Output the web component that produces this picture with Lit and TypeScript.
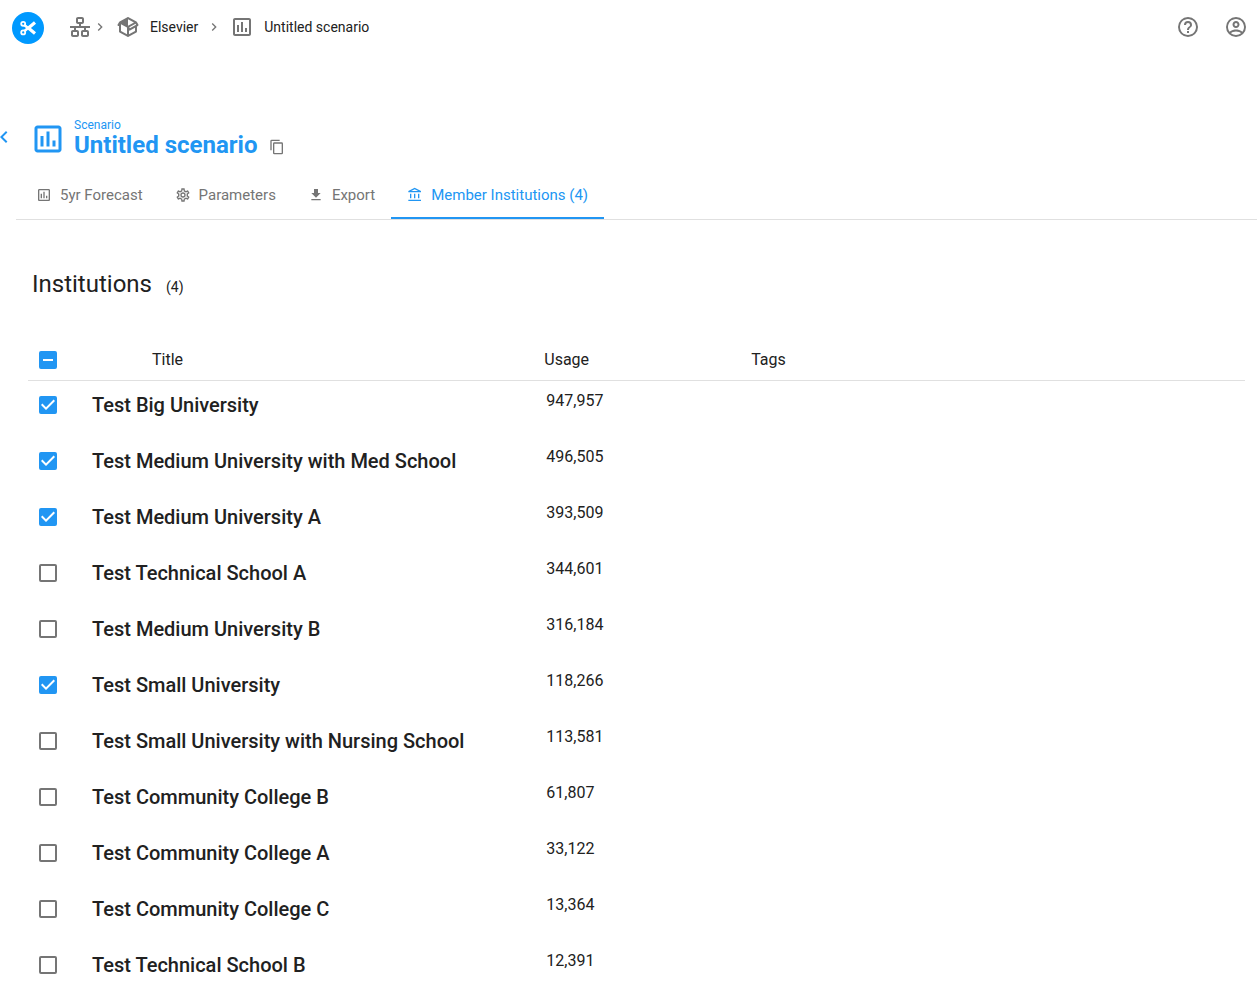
import { LitElement, html, css, svg } from "lit";
import { customElement, property, state } from "lit/decorators.js";
import { classMap } from "lit/directives/class-map.js";

const icons: Record<string, string> = {
  lan: "M10,2C8.89,2 8,2.89 8,4V7C8,8.11 8.89,9 10,9H11V11H2V13H6V15H5C3.89,15 3,15.89 3,17V20C3,21.11 3.89,22 5,22H9C10.11,22 11,21.11 11,20V17C11,15.89 10.11,15 9,15H8V13H16V15H15C13.89,15 13,15.89 13,17V20C13,21.11 13.89,22 15,22H19C20.11,22 21,21.11 21,20V17C21,15.89 20.11,15 19,15H18V13H22V11H13V9H14C15.11,9 16,8.11 16,7V4C16,2.89 15.11,2 14,2H10M10,4H14V7H10V4M5,17H9V20H5V17M15,17H19V20H15V17Z",
  box: "M2,10.96C1.5,10.68 1.35,10.07 1.63,9.59L3.13,7C3.24,6.8 3.41,6.66 3.6,6.58L11.43,2.18C11.59,2.06 11.79,2 12,2C12.21,2 12.41,2.06 12.57,2.18L20.47,6.62C20.66,6.72 20.82,6.88 20.91,7.08L22.36,9.6C22.64,10.08 22.47,10.69 22,10.96L21,11.54V16.5C21,16.88 20.79,17.21 20.47,17.38L12.57,21.82C12.41,21.94 12.21,22 12,22C11.79,22 11.59,21.94 11.43,21.82L3.53,17.38C3.21,17.21 3,16.88 3,16.5V10.96C2.7,11.13 2.32,11.14 2,10.96M12,4.15V10.85L17.96,7.5L12,4.15M5,15.91L11,19.29V12.58L5,9.21V15.91M19,15.91V12.69L14,15.59C13.67,15.77 13.3,15.76 13,15.6V19.29L19,15.91M13.85,13.36L20.13,9.73L19.55,8.72L13.27,12.35L13.85,13.36Z",
  chart: "M9 17H7V10H9V17M13 17H11V7H13V17M17 17H15V13H17V17M19 19H5V5H19V19.1M19 3H5C3.9 3 3 3.9 3 5V19C3 20.1 3.9 21 5 21H19C20.1 21 21 20.1 21 19V5C21 3.9 20.1 3 19 3Z",
  help: "M11,18H13V16H11V18M12,2A10,10 0 0,0 2,12A10,10 0 0,0 12,22A10,10 0 0,0 22,12A10,10 0 0,0 12,2M12,20C7.59,20 4,16.41 4,12C4,7.59 7.59,4 12,4C16.41,4 20,7.59 20,12C20,16.41 16.41,20 12,20M12,6A4,4 0 0,0 8,10H10A2,2 0 0,1 12,8A2,2 0 0,1 14,10C14,12 11,11.75 11,15H13C13,12.75 16,12.5 16,10A4,4 0 0,0 12,6Z",
  account: "M12,2A10,10 0 0,0 2,12A10,10 0 0,0 12,22A10,10 0 0,0 22,12A10,10 0 0,0 12,2M7.07,18.28C7.5,17.38 10.12,16.5 12,16.5C13.88,16.5 16.5,17.38 16.93,18.28C15.57,19.36 13.86,20 12,20C10.14,20 8.43,19.36 7.07,18.28M18.36,16.83C16.93,15.09 13.46,14.5 12,14.5C10.54,14.5 7.07,15.09 5.64,16.83C4.62,15.5 4,13.82 4,12C4,7.59 7.59,4 12,4C16.41,4 20,7.59 20,12C20,13.82 19.38,15.5 18.36,16.83M12,6C10.06,6 8.5,7.56 8.5,9.5C8.5,11.44 10.06,13 12,13C13.94,13 15.5,11.44 15.5,9.5C15.5,7.56 13.94,6 12,6M12,11A1.5,1.5 0 0,1 10.5,9.5A1.5,1.5 0 0,1 12,8A1.5,1.5 0 0,1 13.5,9.5A1.5,1.5 0 0,1 12,11Z",
  copy: "M19,21H8V7H19M19,5H8A2,2 0 0,0 6,7V21A2,2 0 0,0 8,23H19A2,2 0 0,0 21,21V7A2,2 0 0,0 19,5M16,1H4A2,2 0 0,0 2,3V17H4V3H16V1Z",
  download: "M5,20H19V18H5M19,9H15V3H9V9H5L12,16L19,9Z",
  bank: "M6.5,10H4.5V17H6.5V10M12.5,10H10.5V17H12.5V10M21,19H2V21H21V19M18.5,10H16.5V17H18.5V10M11.5,3.26L16.71,6H6.29L11.5,3.26M11.5,1L2,6V8H21V6L11.5,1Z",
  cog: "M12,8A4,4 0 0,1 16,12A4,4 0 0,1 12,16A4,4 0 0,1 8,12A4,4 0 0,1 12,8M12,10A2,2 0 0,0 10,12A2,2 0 0,0 12,14A2,2 0 0,0 14,12A2,2 0 0,0 12,10M10,22C9.75,22 9.54,21.82 9.5,21.58L9.13,18.93C8.5,18.68 7.96,18.34 7.44,17.94L4.95,18.95C4.73,19.03 4.46,18.95 4.34,18.73L2.34,15.27C2.21,15.05 2.27,14.78 2.46,14.63L4.57,12.97L4.5,12L4.57,11L2.46,9.37C2.27,9.22 2.21,8.95 2.34,8.73L4.34,5.27C4.46,5.05 4.73,4.96 4.95,5.05L7.44,6.05C7.96,5.66 8.5,5.32 9.13,5.07L9.5,2.42C9.54,2.18 9.75,2 10,2H14C14.25,2 14.46,2.18 14.5,2.42L14.87,5.07C15.5,5.32 16.04,5.66 16.56,6.05L19.05,5.05C19.27,4.96 19.54,5.05 19.66,5.27L21.66,8.73C21.79,8.95 21.73,9.22 21.54,9.37L19.43,11L19.5,12L19.43,13L21.54,14.63C21.73,14.78 21.79,15.05 21.66,15.27L19.66,18.73C19.54,18.95 19.27,19.04 19.05,18.95L16.56,17.95C16.04,18.34 15.5,18.68 14.87,18.93L14.5,21.58C14.46,21.82 14.25,22 14,22H10M11.25,4L10.88,6.61C9.68,6.86 8.62,7.5 7.85,8.39L5.44,7.35L4.69,8.65L6.8,10.2C6.4,11.37 6.4,12.64 6.8,13.8L4.68,15.36L5.43,16.66L7.86,15.62C8.63,16.5 9.68,17.14 10.87,17.38L11.24,20H12.76L13.13,17.39C14.32,17.14 15.37,16.5 16.14,15.62L18.57,16.66L19.32,15.36L17.2,13.81C17.6,12.64 17.6,11.37 17.2,10.2L19.31,8.65L18.56,7.35L16.15,8.39C15.38,7.5 14.32,6.86 13.12,6.62L12.75,4H11.25Z",
  right: "M8.59,16.58L13.17,12L8.59,7.41L10,6L16,12L10,18L8.59,16.58Z",
  left: "M15.41,16.58L10.83,12L15.41,7.41L14,6L8,12L14,18L15.41,16.58Z",
};

const icon = (name: string, size = 24, viewBox = "0 0 24 24", height = size) =>
  html`<svg class="icon" width=${size} height=${height} viewBox=${viewBox} aria-hidden="true">
    ${svg`<path fill="currentColor" d=${icons[name]}></path>`}
  </svg>`;

const shared = css`
  * {
    box-sizing: border-box;
  }
  .icon {
    display: block;
    flex: none;
  }
  button {
    display: flex;
    align-items: center;
    padding: 0;
    border: 0;
    background: none;
    color: inherit;
    font: inherit;
    cursor: pointer;
  }
  a {
    color: inherit;
    text-decoration: none;
  }
`;

@customElement("check-box")
class CheckBox extends LitElement {
  @property({ type: Boolean }) checked = false;
  @property({ type: Boolean }) mixed = false;
  @property() label = "";

  static styles = css`
    :host {
      display: block;
    }
    .control {
      display: grid;
      width: 18px;
      height: 18px;
      cursor: pointer;
    }
    .input {
      grid-area: 1 / 1;
      appearance: none;
      width: 18px;
      height: 18px;
      margin: 0;
      border: 2px solid #757575;
      border-radius: 2px;
      background: #fff;
    }
    .input:checked,
    .input:indeterminate {
      border-color: #2196f3;
      background: #2196f3;
    }
    .mark {
      grid-area: 1 / 1;
      z-index: 1;
      pointer-events: none;
      color: #fff;
    }
  `;

  private toggle(e: Event) {
    this.checked = (e.target as HTMLInputElement).checked;
    this.dispatchEvent(new CustomEvent("toggle", { detail: this.checked }));
  }

  render() {
    const mark = this.mixed
      ? "M17,13H7V11H17"
      : this.checked
        ? "M10,17L5,12L6.41,10.58L10,14.17L17.59,6.58L19,8"
        : "";
    return html`<label class="control">
      <input
        class="input"
        type="checkbox"
        aria-label=${this.label}
        .checked=${this.checked}
        .indeterminate=${this.mixed}
        @change=${this.toggle}
      />
      <svg class="mark" width="18" height="18" viewBox="3 3 18 18" aria-hidden="true">
        <path fill="currentColor" d=${mark}></path>
      </svg>
    </label>`;
  }
}

@customElement("app-bar")
class AppBar extends LitElement {
  static styles = [
    shared,
    css`
      :host {
        display: block;
      }
      .bar {
        display: flex;
        align-items: center;
        height: 56px;
        padding: 0 9px 0 12px;
        color: #757575;
      }
      .crumbs {
        display: flex;
        align-items: center;
        align-self: flex-start;
        height: 54px;
        margin-left: 24px;
        font-size: 14px;
      }
      .crumb {
        display: flex;
        align-items: center;
        gap: 10px;
      }
      .name {
        color: #212121;
      }
      .sep {
        margin-right: 8px;
      }
      .name-sep {
        margin: 0 8px;
      }
      .actions {
        display: flex;
        align-items: center;
        align-self: flex-start;
        height: 54px;
        gap: 24px;
        margin-left: auto;
      }
    `,
  ];

  render() {
    return html`<header class="bar">
      <a href="#" aria-label="Home">
        <svg class="icon" width="32" height="32" viewBox="0 0 32 32" aria-hidden="true">
          <circle cx="16" cy="16" r="16" fill="#0099ff"></circle>
          <g fill="none" stroke="#fff">
            <circle cx="11.2" cy="11.8" r="2" stroke-width="1.8"></circle>
            <circle cx="11.2" cy="20.4" r="2" stroke-width="1.8"></circle>
            <path stroke-width="2.6" d="M12.6 13.2L16 16.1M12.6 19L16 16.1"></path>
            <path
              stroke-width="3.2"
              stroke-linejoin="round"
              d="M23 10.6L16.4 16.1L23 21.6"
            ></path>
          </g>
        </svg>
      </a>
      <nav class="crumbs" aria-label="Breadcrumb">
        <a class="crumb" href="#" aria-label="Organization">${icon("lan")}</a>
        <span class="sep">${icon("right", 16)}</span>
        <a class="crumb" href="#">${icon("box")}<span class="name">Elsevier</span></a>
        <span class="name-sep">${icon("right", 16)}</span>
        <a class="crumb" href="#">${icon("chart")}<span class="name">Untitled scenario</span></a>
      </nav>
      <div class="actions">
        <button aria-label="Help">${icon("help")}</button>
        <button aria-label="Account">${icon("account")}</button>
      </div>
    </header>`;
  }
}

@customElement("scenario-head")
class ScenarioHead extends LitElement {
  @state() private active = 3;

  private tabs = [
    { icon: "chart", label: "5yr Forecast" },
    { icon: "cog", label: "Parameters" },
    { icon: "download", label: "Export" },
    { icon: "bank", label: "Member Institutions (4)" },
  ];

  static styles = [
    shared,
    css`
      :host {
        display: block;
      }
      .head {
        display: flex;
        align-items: flex-end;
        padding-top: 61px;
        color: #2196f3;
      }
      .back {
        align-self: center;
        width: 30px;
      }
      .titles {
        margin-left: 8px;
      }
      .kind {
        margin: 0;
        font-size: 12px;
        line-height: 16px;
      }
      .title {
        margin: 0;
        font-size: 24px;
        line-height: 24px;
        font-weight: 700;
      }
      .copy {
        margin: 0 0 2px 12px;
        color: #757575;
      }
      .tabs {
        display: flex;
        height: 49px;
        margin: 14px 0 0 16px;
        padding-left: 4px;
        border-bottom: 1px solid #e0e0e0;
      }
      .tab {
        gap: 8px;
        padding: 2px 16px 0;
        border-bottom: 2px solid transparent;
        color: #757575;
        font-size: 15px;
      }
      .tab.active {
        border-bottom-color: #2196f3;
        color: #2196f3;
      }
    `,
  ];

  render() {
    return html`<div class="head">
        <button class="back" aria-label="Back">${icon("left", 8, "8 6 8 12", 12)}</button>
        ${icon("chart", 36)}
        <div class="titles">
          <p class="kind">Scenario</p>
          <h1 class="title">Untitled scenario</h1>
        </div>
        <button class="copy" aria-label="Copy scenario">${icon("copy", 16)}</button>
      </div>
      <div class="tabs" role="tablist">
        ${this.tabs.map(
          (t, i) => html`<button
            role="tab"
            aria-selected=${i === this.active ? "true" : "false"}
            class=${classMap({ tab: true, active: i === this.active })}
            @click=${() => (this.active = i)}
          >
            ${icon(t.icon, 16)}<span>${t.label}</span>
          </button>`,
        )}
      </div>`;
  }
}

@customElement("institution-table")
class InstitutionTable extends LitElement {
  @state() private rows = [
    { title: "Test Big University", usage: 947957, on: true },
    { title: "Test Medium University with Med School", usage: 496505, on: true },
    { title: "Test Medium University A", usage: 393509, on: true },
    { title: "Test Technical School A", usage: 344601, on: false },
    { title: "Test Medium University B", usage: 316184, on: false },
    { title: "Test Small University", usage: 118266, on: true },
    { title: "Test Small University with Nursing School", usage: 113581, on: false },
    { title: "Test Community College B", usage: 61807, on: false },
    { title: "Test Community College A", usage: 33122, on: false },
    { title: "Test Community College C", usage: 13364, on: false },
    { title: "Test Technical School B", usage: 12391, on: false },
  ];

  static styles = [
    shared,
    css`
      :host {
        display: block;
        padding: 0 12px 0 28px;
      }
      .heading {
        display: flex;
        align-items: baseline;
        gap: 14px;
        margin: 0;
        padding: 48px 0 40px 4px;
        font-size: 24px;
        line-height: 32px;
        font-weight: 400;
      }
      .count {
        font-size: 14px;
        line-height: 16px;
      }
      .table {
        width: 100%;
        table-layout: fixed;
        border-collapse: separate;
        border-spacing: 0;
        font-size: 16px;
        line-height: 24px;
        text-align: left;
      }
      .col-check {
        width: 64px;
      }
      .col-title {
        width: 37%;
      }
      .col-usage {
        width: 17%;
      }
      th {
        height: 41px;
        padding: 0 0 0 2px;
        border-bottom: 1px solid #e0e0e0;
        font-weight: 400;
        vertical-align: middle;
      }
      td {
        height: 56px;
        padding: 8px 0 0 4px;
        vertical-align: top;
      }
      th.check {
        padding-left: 11px;
      }
      td.check {
        padding: 15px 0 0 11px;
      }
      th.title {
        padding-left: 60px;
      }
      td.title {
        padding: 12px 0 0;
        font-size: 20px;
        font-weight: 500;
      }
    `,
  ];

  private setAll(on: boolean) {
    this.rows = this.rows.map((r) => ({ ...r, on }));
  }

  private setRow(index: number, on: boolean) {
    this.rows = this.rows.map((r, i) => (i === index ? { ...r, on } : r));
  }

  render() {
    const on = this.rows.filter((r) => r.on).length;
    return html`<h2 class="heading">Institutions <span class="count">(${on})</span></h2>
      <table class="table">
        <colgroup>
          <col class="col-check" />
          <col class="col-title" />
          <col class="col-usage" />
          <col />
        </colgroup>
        <thead>
          <tr>
            <th class="check">
              <check-box
                label="Select all"
                .checked=${on === this.rows.length}
                .mixed=${on > 0 && on < this.rows.length}
                @toggle=${(e: CustomEvent) => this.setAll(e.detail)}
              ></check-box>
            </th>
            <th class="title">Title</th>
            <th>Usage</th>
            <th>Tags</th>
          </tr>
        </thead>
        <tbody>
          ${this.rows.map(
            (r, i) => html`<tr>
              <td class="check">
                <check-box
                  .label=${r.title}
                  .checked=${r.on}
                  @toggle=${(e: CustomEvent) => this.setRow(i, e.detail)}
                ></check-box>
              </td>
              <td class="title">${r.title}</td>
              <td>${r.usage.toLocaleString("en-US")}</td>
              <td></td>
            </tr>`,
          )}
        </tbody>
      </table>`;
  }
}

@customElement("app-root")
class AppRoot extends LitElement {
  static styles = css`
    :host {
      display: block;
      min-height: 100vh;
      background: #fff;
      color: #212121;
      font-family: Roboto, "Liberation Sans", sans-serif;
    }
  `;

  render() {
    return html`<app-bar></app-bar>
      <main>
        <scenario-head></scenario-head>
        <institution-table></institution-table>
      </main>`;
  }
}
